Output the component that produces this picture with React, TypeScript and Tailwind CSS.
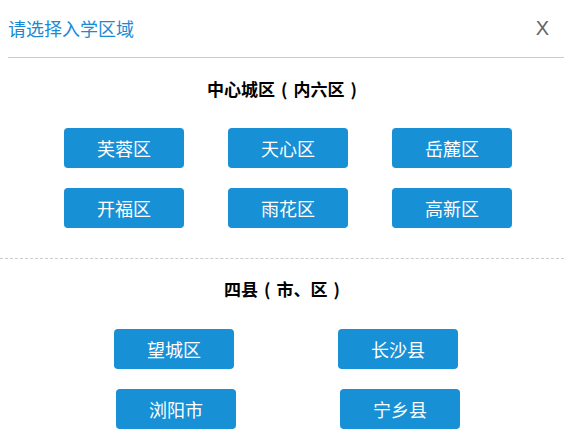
import React from "react";

const font = { fontFamily: '"Noto Sans CJK SC", "Noto Sans", sans-serif' };

function Btn({ label }: { label: string }) {
  return (
    <div className="w-[120px] h-[40px] rounded-[4px] bg-[#1890d6] text-white text-[18px] leading-[40px] text-center">
      {label}
    </div>
  );
}

function P({ c }: { c: string }) {
  return <span className="mx-[6px]">{c}</span>;
}

export default function App() {
  return (
    <div className="w-[564px] h-[435px] bg-white overflow-hidden" style={font}>
      <div className="ml-2 h-[58px] border-b border-[#cccccc] flex items-center justify-between pr-[15px]">
        <span className="text-[18px] text-[#1a8ad4] leading-[20px] -mt-[1px]">请选择入学区域</span>
        <span
          className="text-[20px] text-[#666666] leading-[20px] -mt-[1px]"
          style={{ fontFamily: '"Liberation Sans", Arial, sans-serif' }}
        >
          X
        </span>
      </div>

      <div className="pt-[21px] pb-[30px] border-b border-dashed border-[#cccccc]">
        <div className="text-center text-[17px] font-bold leading-[20px] text-black pl-[6px]">
          中心城区<P c="(" />内六区<P c=")" />
        </div>
        <div className="mt-[29px] pl-[64px] grid grid-cols-[120px_120px_120px] gap-x-[44px] gap-y-[20px]">
          <Btn label="芙蓉区" />
          <Btn label="天心区" />
          <Btn label="岳麓区" />
          <Btn label="开福区" />
          <Btn label="雨花区" />
          <Btn label="高新区" />
        </div>
      </div>

      <div className="pt-[20px]">
        <div className="text-center text-[17px] font-bold leading-[20px] text-black pl-[6px]">
          四县<P c="(" />市、区<P c=")" />
        </div>
        <div className="mt-[30px] flex flex-col gap-[20px]">
          <div className="flex gap-[104px] pl-[114px]">
            <Btn label="望城区" />
            <Btn label="长沙县" />
          </div>
          <div className="flex gap-[104px] pl-[116px]">
            <Btn label="浏阳市" />
            <Btn label="宁乡县" />
          </div>
        </div>
      </div>
    </div>
  );
}
